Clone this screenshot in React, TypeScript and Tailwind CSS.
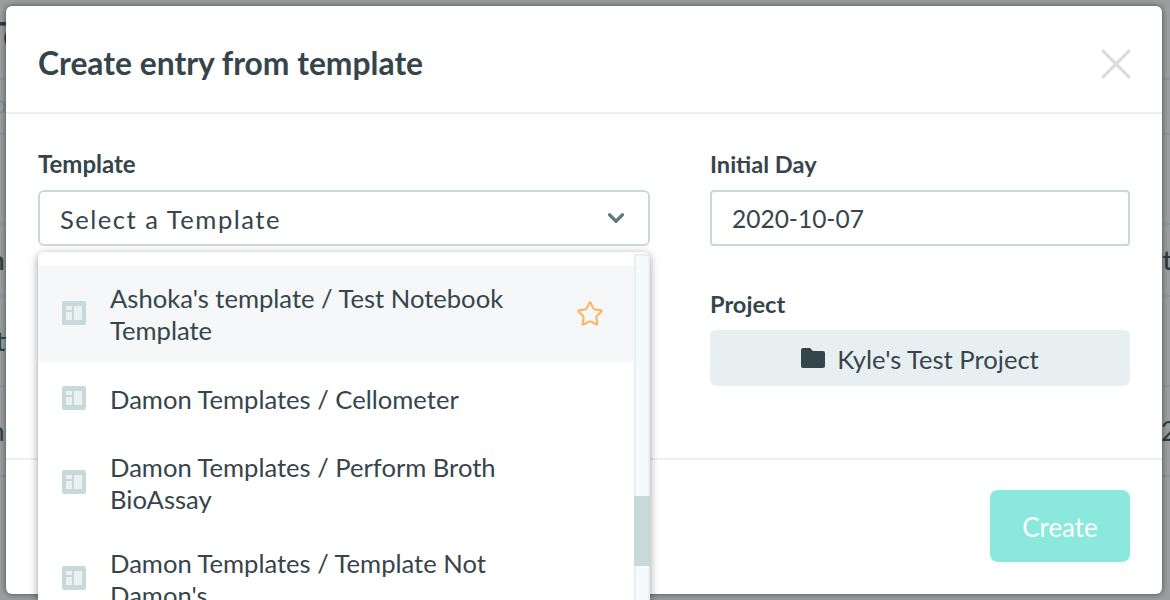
import { ChevronDown, Star, X } from "lucide-react";

const templates = [
  { name: "Ashoka's template / Test Notebook Template", active: true },
  { name: "Damon Templates / Cellometer", active: false },
  { name: "Damon Templates / Perform Broth BioAssay", active: false },
  { name: "Damon Templates / Template Not Damon's", active: false },
];

const TemplateIcon = () => (
  <svg width="24" height="24" viewBox="0 0 24 24" className="-mt-[2px] shrink-0">
    <rect width="24" height="24" rx="2" fill="#c8d9da" />
    <rect x="4" y="5" width="6" height="4" fill="#eaf1f1" />
    <rect x="4" y="11" width="6" height="8" fill="#eaf1f1" />
    <rect x="12" y="5" width="8" height="14" fill="#eaf1f1" />
  </svg>
);

const FolderIcon = () => (
  <svg width="24" height="22" viewBox="0 0 24 22" className="shrink-0">
    <path
      fill="#36454b"
      d="M2 1h7l3 3h10a2 2 0 0 1 2 2v13a2 2 0 0 1-2 2H2a2 2 0 0 1-2-2V3a2 2 0 0 1 2-2z"
    />
  </svg>
);

// page behind the modal, mostly hidden
const Backdrop = () => (
  <div className="h-[600px] overflow-hidden bg-[#9c9f9f] text-[26px] text-[#2e3d42]">
    <div className="flex h-[80px] items-center border-b-2 border-[#8a9a9c] pb-[10px]">
      <span className="-ml-[14px] text-[36px] font-semibold">Te</span>
    </div>
    <div className="flex h-[55px] items-center border-b-2 border-[#8a9a9c]">
      <span className="-ml-[8px] h-[14px] w-[14px] rounded-full border-2 border-[#7d9093]" />
    </div>
    <div className="h-[90px] border-b-2 border-[#8a9a9c]" />
    <div className="flex h-[72px] items-center justify-between border-b-2 border-[#8a9a9c]">
      <span className="-ml-[10px] font-semibold">n</span>
      <span className="-mr-[2px] font-semibold">t</span>
    </div>
    <div className="flex h-[90px] items-center border-b-2 border-[#8a9a9c]">
      <span className="-ml-[4px]">ti</span>
    </div>
    <div className="flex h-[90px] items-center justify-between border-b-2 border-[#8a9a9c]">
      <span className="-ml-[10px]">n</span>
      <span className="-mr-[6px]">2</span>
    </div>
  </div>
);

export default function App() {
  return (
    <div className="relative h-[600px] w-[1170px] overflow-hidden font-['Lato',sans-serif] text-[#36454b]">
      <Backdrop />

      <div className="absolute left-[6px] top-[6px] flex h-[588px] w-[1156px] flex-col rounded-[6px] bg-white shadow-[0_0_6px_rgba(0,0,0,0.55)]">
        <div className="flex h-[108px] shrink-0 items-center justify-between border-b-2 border-[#eaeff2] pl-[32px] pr-[32px] pt-[8px]">
          <h1 className="text-[31.8px] font-bold leading-[36px]">Create entry from template</h1>
          <X size={52} strokeWidth={1.5} className="-mr-[12px] mt-[2px] text-[#dcdedd]" />
        </div>

        <div className="flex h-[346px] shrink-0 gap-[60px] border-b-2 border-[#eaeff2] pl-[32px] pr-[32px] pt-[32px]">
          <div className="relative w-[612px]">
            <label className="block text-[24px] font-bold leading-[36px]">Template</label>
            <div className="mt-[8px] flex h-[56px] items-center justify-between rounded-[6px] border-2 border-[#c8d9da] pl-[20px] pr-[19px]">
              <span className="pt-[3px] text-[25.6px] tracking-[1.5px]">Select a Template</span>
              <ChevronDown size={26} strokeWidth={3} className="text-[#5f7a80]" />
            </div>
          </div>

          <div className="w-[420px]">
            <label className="block text-[23.6px] font-bold leading-[36px]">Initial Day</label>
            <div className="mt-[8px] flex h-[56px] items-center rounded-[4px] border-2 border-[#c8d9da] pl-[20px]">
              <span className="pt-[2px] text-[24.5px]">2020-10-07</span>
            </div>
            <label className="mt-[40px] block text-[23.6px] font-bold leading-[36px]">Project</label>
            <div className="mt-[8px] flex h-[56px] items-center justify-center gap-[12px] rounded-[6px] bg-[#e8eff1]">
              <FolderIcon />
              <span className="pt-[3px] text-[25.6px]">Kyle's Test Project</span>
            </div>
          </div>
        </div>

        <div className="flex flex-1 items-start justify-end pr-[32px] pt-[30px]">
          <button className="h-[72px] w-[140px] rounded-[8px] bg-[#8ae8dc] pt-[2px] text-[26px] text-white">Create</button>
        </div>

        {/* open select menu, runs off the bottom of the page */}
        <div className="absolute left-[32px] top-[246px] flex h-[360px] w-[612px] overflow-hidden rounded-t-[6px] bg-white shadow-[0_2px_8px_rgba(0,0,0,0.4)]">
          <div className="w-[596px] pt-[14px]">
            {templates.map((t, i) => (
              <div
                key={t.name}
                className={`flex items-center pl-[24px] pr-[32px] ${t.active ? "bg-[#f5f7f9]" : ""} ${i === 1 ? "h-[73px]" : "h-[96px]"}`}
              >
                <TemplateIcon />
                <span className="ml-[24px] w-[430px] shrink-0 text-[25.6px] leading-[32px]">{t.name}</span>
                {t.active && <Star size={28} strokeWidth={1.75} className="ml-[36px] shrink-0 text-[#fdb35f]" />}
              </div>
            ))}
          </div>
          <div className="mt-[2px] w-[16px] border-x-2 border-t-2 border-[#e8eff0] bg-[#f7fafa] pt-[240px]">
            <div className="-mx-[2px] h-[70px] bg-[#c8d9da]" />
          </div>
        </div>
      </div>
    </div>
  );
}
